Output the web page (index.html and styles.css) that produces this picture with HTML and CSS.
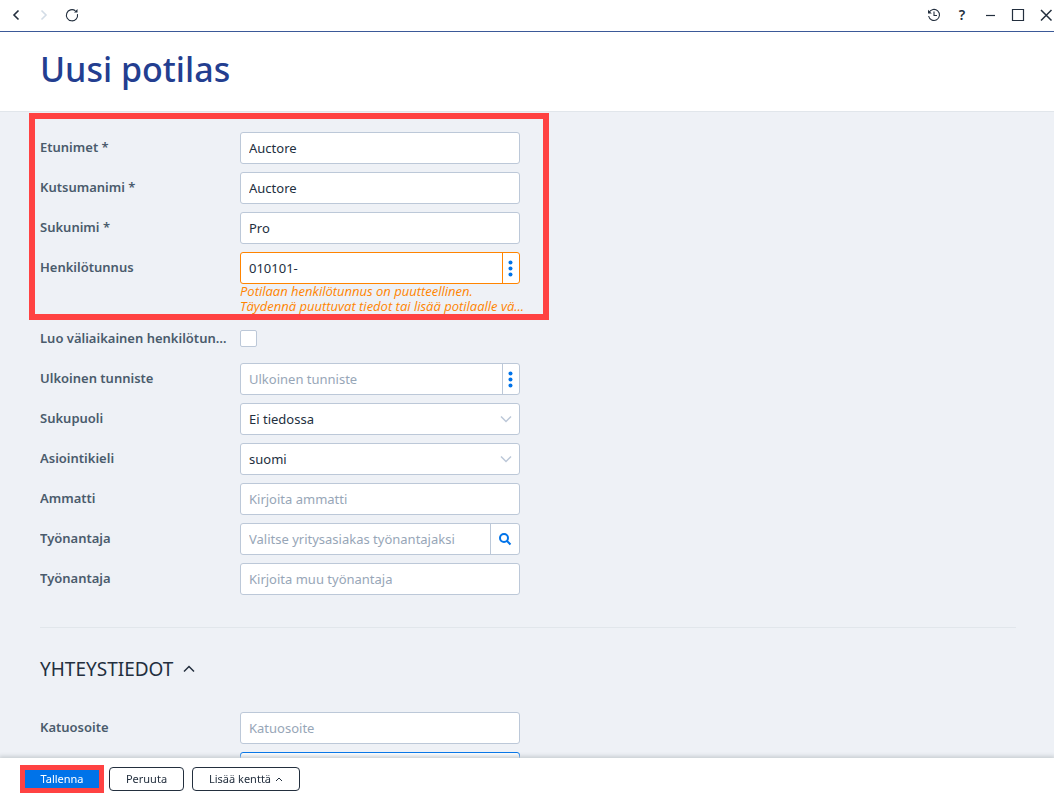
FILE: index.html
```html
<!DOCTYPE html>
<html lang="fi">
<head>
    <meta charset="UTF-8">
    <meta name="viewport" content="width=device-width, initial-scale=1.0">
    <title>Uusi potilas</title>
    <link rel="stylesheet" href="styles.css">
</head>
<body>

    <nav class="toolbar">
        <button type="button" class="tool" aria-label="Takaisin">
            <svg width="14" height="14" viewBox="0 0 14 14"><path d="M9.5 2.5L5 7L9.5 11.5" stroke-width="1.6"/></svg>
        </button>
        <button type="button" class="tool" aria-label="Eteenpäin" disabled>
            <svg width="14" height="14" viewBox="0 0 14 14"><path d="M4.5 2.5L9 7L4.5 11.5" stroke-width="1.6"/></svg>
        </button>
        <button type="button" class="tool" aria-label="Päivitä">
            <svg width="14" height="14" viewBox="0 0 14 14"><path d="M12.5 6.2A5.6 5.6 0 1 1 10.4 2.8" stroke-width="1.1"/><path class="solid" d="M12.5 1V4.6H9z"/></svg>
        </button>
        <span class="spacer"></span>
        <button type="button" class="tool" aria-label="Historia">
            <svg width="14" height="14" viewBox="0 0 14 14"><path d="M2 4.6A5.5 5.5 0 1 1 1.6 8M7 3.5V7.5H10" stroke-width="1.1"/><path class="solid" d="M1 1.8V5.6H4.8z"/></svg>
        </button>
        <button type="button" class="tool help" aria-label="Ohje">?</button>
        <button type="button" class="tool" aria-label="Pienennä">
            <svg width="14" height="14" viewBox="0 0 14 14"><path d="M3 7.5H12" stroke-width="1.2"/></svg>
        </button>
        <button type="button" class="tool" aria-label="Suurenna">
            <svg width="14" height="14" viewBox="0 0 14 14"><path d="M1.5 1.5H12.5V12.5H1.5z" stroke-width="1.2"/></svg>
        </button>
        <button type="button" class="tool" aria-label="Sulje">
            <svg width="14" height="14" viewBox="0 0 14 14"><path d="M2 2L12.5 12.5M12.5 2L2 12.5" stroke-width="1.5"/></svg>
        </button>
    </nav>

    <header class="page-header">
        <h1>Uusi potilas</h1>
    </header>

    <main class="content">
        <form id="patientForm">
            <div class="rows highlight">
                <div class="row">
                    <label for="firstNames">Etunimet *</label>
                    <div class="field"><input type="text" id="firstNames" value="Auctore" required></div>
                </div>
                <div class="row">
                    <label for="callName">Kutsumanimi *</label>
                    <div class="field"><input type="text" id="callName" value="Auctore" required></div>
                </div>
                <div class="row">
                    <label for="lastName">Sukunimi *</label>
                    <div class="field"><input type="text" id="lastName" value="Pro" required></div>
                </div>
                <div class="row">
                    <label for="ssn">Henkilötunnus</label>
                    <div>
                        <div class="field warning">
                            <input type="text" id="ssn" value="010101-">
                            <button type="button" class="more" aria-label="Lisää toimintoja">
                                <svg width="5" height="17" viewBox="0 0 5 17"><circle cx="2.5" cy="2.5" r="2"/><circle cx="2.5" cy="8.5" r="2"/><circle cx="2.5" cy="14.5" r="2"/></svg>
                            </button>
                        </div>
                        <p class="message">Potilaan henkilötunnus on puutteellinen.</p>
                        <p class="message">Täydennä puuttuvat tiedot tai lisää potilaalle vä...</p>
                    </div>
                </div>
            </div>

            <div class="rows">
                <div class="row">
                    <label for="tempSsn">Luo väliaikainen henkilötunnus</label>
                    <input type="checkbox" id="tempSsn">
                </div>
                <div class="row">
                    <label for="externalId">Ulkoinen tunniste</label>
                    <div class="field">
                        <input type="text" id="externalId" placeholder="Ulkoinen tunniste">
                        <button type="button" class="more" aria-label="Lisää toimintoja">
                            <svg width="5" height="17" viewBox="0 0 5 17"><circle cx="2.5" cy="2.5" r="2"/><circle cx="2.5" cy="8.5" r="2"/><circle cx="2.5" cy="14.5" r="2"/></svg>
                        </button>
                    </div>
                </div>
                <div class="row">
                    <label for="gender">Sukupuoli</label>
                    <div class="field">
                        <select id="gender"><option>Ei tiedossa</option><option>Mies</option><option>Nainen</option></select>
                        <svg class="chevron" width="12" height="8" viewBox="0 0 12 8"><path d="M1 1.5L6 6.5L11 1.5"/></svg>
                    </div>
                </div>
                <div class="row">
                    <label for="language">Asiointikieli</label>
                    <div class="field">
                        <select id="language"><option>suomi</option><option>ruotsi</option></select>
                        <svg class="chevron" width="12" height="8" viewBox="0 0 12 8"><path d="M1 1.5L6 6.5L11 1.5"/></svg>
                    </div>
                </div>
                <div class="row">
                    <label for="profession">Ammatti</label>
                    <div class="field"><input type="text" id="profession" placeholder="Kirjoita ammatti"></div>
                </div>
                <div class="row">
                    <label for="employer">Työnantaja</label>
                    <div class="field">
                        <input type="text" id="employer" placeholder="Valitse yritysasiakas työnantajaksi">
                        <button type="button" class="search" aria-label="Hae">
                            <svg width="14" height="14" viewBox="0 0 14 14"><circle cx="6" cy="6" r="4"/><path d="M9 9L12.5 12.5"/></svg>
                        </button>
                    </div>
                </div>
                <div class="row">
                    <label for="otherEmployer">Työnantaja</label>
                    <div class="field"><input type="text" id="otherEmployer" placeholder="Kirjoita muu työnantaja"></div>
                </div>
            </div>

            <hr>

            <h2>YHTEYSTIEDOT
                <svg width="12" height="8" viewBox="0 0 12 8"><path d="M1 6.5L6 1.5L11 6.5"/></svg>
            </h2>

            <div class="rows">
                <div class="row">
                    <label for="street">Katuosoite</label>
                    <div class="field"><input type="text" id="street" placeholder="Katuosoite"></div>
                </div>
                <div class="row">
                    <label for="postcode"></label>
                    <div class="field active"><input type="text" id="postcode"></div>
                </div>
            </div>
        </form>
    </main>

    <footer class="actions">
        <button type="submit" form="patientForm" class="btn primary">Tallenna</button>
        <button type="button" class="btn">Peruuta</button>
        <button type="button" class="btn add">Lisää kenttä
            <svg width="8" height="6" viewBox="0 0 8 6"><path d="M1 5L4 2L7 5"/></svg>
        </button>
    </footer>

</body>
</html>
```

FILE: styles.css
```css
* {
    box-sizing: border-box;
}
body {
    display: flex;
    flex-direction: column;
    height: 100vh;
    margin: 0;
    font-family: "Noto Sans", "Open Sans", sans-serif;
    font-size: 13px;
    color: #232f3e;
    background: #fff;
}
button, input, select {
    font: inherit;
    color: inherit;
}
svg {
    fill: none;
    stroke: currentColor;
}
h1, h2, p {
    margin: 0;
}

/* top bar */
.toolbar {
    display: flex;
    flex: none;
    align-items: center;
    gap: 14px;
    height: 32px;
    padding: 0 1px 2px 9px;
    border-bottom: 1px solid #3b5998;
}
.tool {
    display: flex;
    align-items: center;
    justify-content: center;
    width: 14px;
    height: 14px;
    padding: 0;
    border: none;
    background: none;
}
.tool:disabled {
    color: #d3dce6;
}
.tool .solid {
    fill: currentColor;
    stroke: none;
}
.help {
    font-size: 14px;
    font-weight: 600;
}
.spacer {
    flex: 1;
}

.page-header {
    flex: none;
    height: 80px;
    padding: 14px 40px;
    border-bottom: 1px solid #e1e6eb;
}
h1 {
    font-size: 34px;
    font-weight: 500;
    line-height: 46px;
    color: #233e90;
}

/* form */
.content {
    flex: 1;
    min-height: 0;
    padding: 1px 38px 20px 40px;
    overflow-y: auto;
    scrollbar-width: none;
    background: #eef1f6;
}
.rows {
    display: flex;
    flex-direction: column;
    gap: 8px;
}
.highlight {
    width: 520px;
    margin: 0 0 3px -11px;
    padding: 13px 5px 0;
    border: 6px solid #ff4242;
}
.row {
    display: grid;
    grid-template-columns: 200px 280px;
    min-height: 32px;
    align-items: start;
}
.row label {
    padding-right: 12px;
    overflow: hidden;
    font-weight: 600;
    line-height: 30px;
    color: #4a5b6c;
    white-space: nowrap;
    text-overflow: ellipsis;
}
.field {
    display: flex;
    position: relative;
    height: 32px;
    border: 1px solid #bcc8d8;
    border-radius: 3px;
    background: #fff;
    overflow: hidden;
}
.field input, .field select {
    flex: 1;
    min-width: 0;
    padding: 0 8px;
    border: none;
    outline: none;
    background: none;
    appearance: none;
}
.field input::placeholder {
    color: #97a6b7;
}
.field button {
    display: flex;
    align-items: center;
    justify-content: center;
    padding: 0;
    border: none;
    border-left: 1px solid #bcc8d8;
    background: none;
    color: #0073e9;
}
.field .more {
    width: 17px;
    padding-right: 1px;
}
.more svg {
    fill: currentColor;
    stroke: none;
}
.field .search {
    width: 29px;
}
.search svg {
    stroke-width: 2;
}
.warning, .field.warning button {
    border-color: #ff8400;
}
.field.active {
    border-color: #0073e9;
}
.chevron {
    position: absolute;
    top: 11px;
    right: 7px;
    color: #bcc8d8;
    stroke-width: 1.5;
    pointer-events: none;
}
.message {
    font-family: "Open Sans", "Noto Sans", sans-serif;
    font-size: 13px;
    font-style: italic;
    line-height: 15px;
    color: #ff8400;
    white-space: nowrap;
}
input[type="checkbox"] {
    width: 17px;
    height: 17px;
    margin: 7px 0 0;
    border: 1px solid #bcc8d8;
    border-radius: 2px;
    background: #fff;
    appearance: none;
}
input[type="checkbox"]:checked {
    background: #0073e9;
}
hr {
    margin: 32px 0 0;
    border: none;
    border-top: 1px solid #e1e6eb;
}
h2 {
    display: flex;
    align-items: center;
    gap: 10px;
    margin: 27px 0 29px;
    font-size: 19px;
    font-weight: 400;
    line-height: 28px;
}
h2 svg {
    stroke-width: 1.5;
}

/* bottom bar */
.actions {
    display: flex;
    position: relative;
    flex: none;
    align-items: center;
    gap: 5px;
    padding: 7px 20px 3px;
    background: #fff;
    box-shadow: 0 -1px 4px 1px #c9cfd3;
}
.btn {
    width: 75px;
    height: 24px;
    padding: 0;
    border: 1px solid #232f3e;
    border-radius: 4px;
    background: #fff;
    font-size: 11px;
    line-height: 18px;
}
.primary {
    width: 84px;
    height: 28px;
    border: 5px solid #ff4242;
    border-radius: 0;
    background: #0073e9;
    color: #fff;
}
.add {
    display: flex;
    align-items: center;
    justify-content: center;
    gap: 4px;
    width: 108px;
    margin-left: 3px;
}
```
